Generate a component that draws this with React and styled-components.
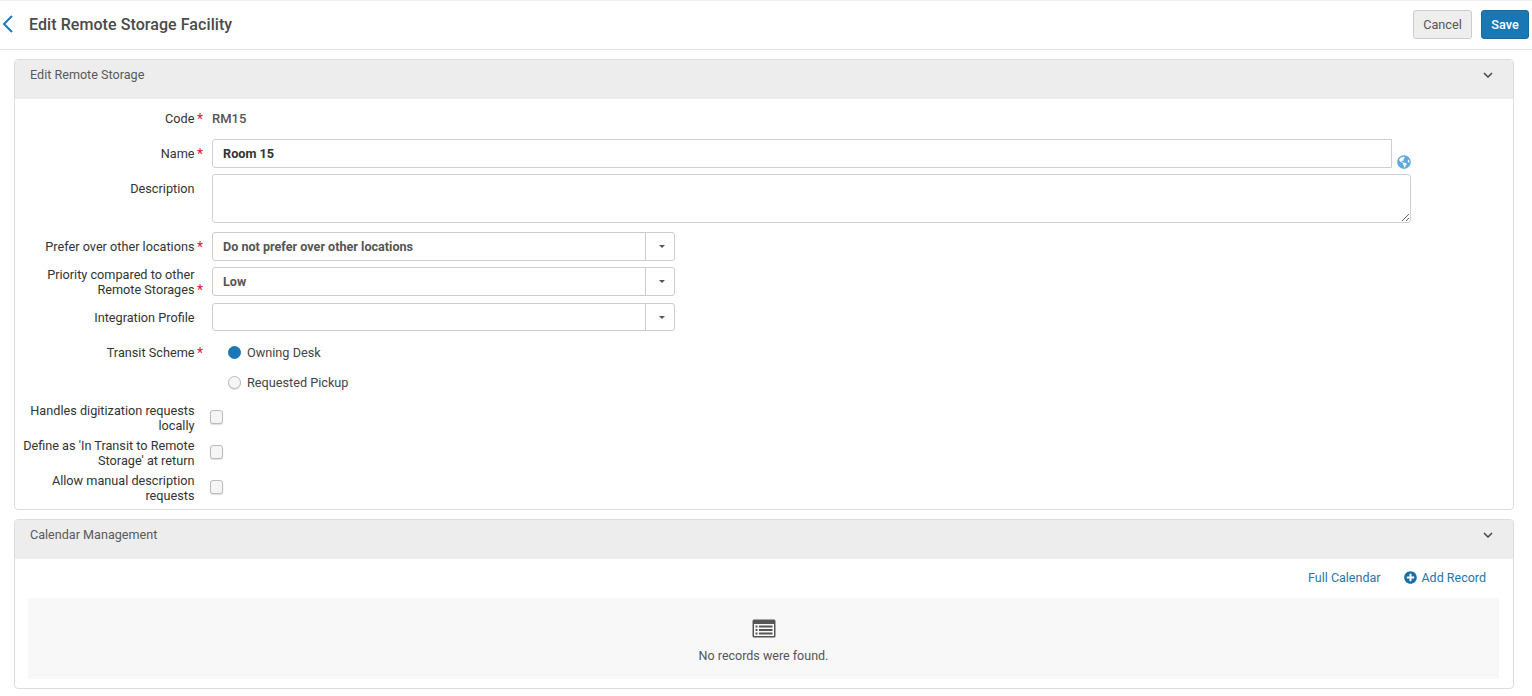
import React from 'react';
import styled, { createGlobalStyle } from 'styled-components';
import { FaGlobeAmericas, FaPlusCircle } from 'react-icons/fa';

const GlobalStyle = createGlobalStyle`
  html, body {
    margin: 0;
    padding: 0;
    background: #fff;
    overflow: hidden;
  }
  body {
    font-family: Roboto, "Liberation Sans", sans-serif;
    font-size: 12.7px;
    color: #444;
  }
  * { box-sizing: border-box; }
`;

const BackIcon = () => (
  <svg width="12" height="18" viewBox="0 0 12 18" fill="none">
    <path d="M10 1 L2 9 L10 17" stroke="#1a7ab8" strokeWidth="2" />
  </svg>
);

const ChevronIcon = () => (
  <svg width="10" height="6" viewBox="0 0 10 6" fill="none">
    <path d="M1 1 L5 5 L9 1" stroke="#444" strokeWidth="1.5" />
  </svg>
);

const RecordsIcon = () => (
  <svg width="24" height="19" viewBox="0 0 24 19">
    <rect x="0.5" y="0.5" width="23" height="18" rx="1.5" fill="#555" />
    <rect x="2" y="5" width="20" height="12" fill="#f8f8f8" />
    <g fill="#555">
      <rect x="3.5" y="6.5" width="2" height="2" />
      <rect x="7" y="6.5" width="13.5" height="2" />
      <rect x="3.5" y="10" width="2" height="2" />
      <rect x="7" y="10" width="13.5" height="2" />
      <rect x="3.5" y="13.5" width="2" height="2" />
      <rect x="7" y="13.5" width="13.5" height="2" />
    </g>
  </svg>
);

const SelectField = ({ value }) => (
  <Select>
    <SelectValue>{value}</SelectValue>
    <SelectToggle>
      <Caret />
    </SelectToggle>
  </Select>
);

const CheckRow = ({ label, top = 5 }) => (
  <Row $top={top} $height={30}>
    <Label>{label}</Label>
    <Checkbox />
  </Row>
);

export default function App() {
  return (
    <Page>
      <GlobalStyle />
      <Header>
        <TitleGroup>
          <BackIcon />
          <Title>Edit Remote Storage Facility</Title>
        </TitleGroup>
        <Actions>
          <CancelButton>Cancel</CancelButton>
          <SaveButton>Save</SaveButton>
        </Actions>
      </Header>

      <Panel $top={9}>
        <PanelHeader>
          <PanelTitle>Edit Remote Storage</PanelTitle>
          <ChevronIcon />
        </PanelHeader>
        <FormBody>
          <Row $top={0} $height={25}>
            <Label $required>Code</Label>
            <StaticValue>RM15</StaticValue>
          </Row>
          <Row $top={8} $height={29}>
            <Label $required>Name</Label>
            <NameInput>Room 15</NameInput>
            <GlobeWrap>
              <FaGlobeAmericas size={14} color="#5aa9e0" />
            </GlobeWrap>
          </Row>
          <Row $top={6} $height={49} $alignTop>
            <Label $alignTop>Description</Label>
            <TextArea />
          </Row>
          <Row $top={9} $height={29}>
            <Label $required>Prefer over other locations</Label>
            <SelectField value="Do not prefer over other locations" />
          </Row>
          <Row $top={6} $height={29}>
            <Label $required>Priority compared to other Remote Storages</Label>
            <SelectField value="Low" />
          </Row>
          <Row $top={7} $height={28}>
            <Label>Integration Profile</Label>
            <SelectField value="" />
          </Row>
          <Row $top={9} $height={25}>
            <Label $required>Transit Scheme</Label>
            <RadioOption>
              <Radio $checked />
              Owning Desk
            </RadioOption>
          </Row>
          <Row $top={5} $height={25}>
            <Label />
            <RadioOption>
              <Radio />
              Requested Pickup
            </RadioOption>
          </Row>
          <CheckRow top={8} label="Handles digitization requests locally" />
          <CheckRow label="Define as 'In Transit to Remote Storage' at return" />
          <CheckRow label="Allow manual description requests" />
        </FormBody>
      </Panel>

      <Panel $top={9}>
        <PanelHeader>
          <PanelTitle>Calendar Management</PanelTitle>
          <ChevronIcon />
        </PanelHeader>
        <CalendarBody>
          <LinkBar>
            <TextLink>Full Calendar</TextLink>
            <TextLink>
              <FaPlusCircle size={13} color="#1a6ea8" />
              Add Record
            </TextLink>
          </LinkBar>
          <EmptyState>
            <RecordsIcon />
            <EmptyText>No records were found.</EmptyText>
          </EmptyState>
        </CalendarBody>
      </Panel>
    </Page>
  );
}

const Page = styled.div`
  width: 1532px;
  height: 696px;
  border-top: 1px solid #f0f0f0;
`;

const Header = styled.header`
  height: 49px;
  display: flex;
  align-items: center;
  justify-content: space-between;
  padding: 0 3px 2px 2px;
  border-bottom: 1px solid #e4e4e4;
`;

const TitleGroup = styled.div`
  display: flex;
  align-items: center;
  gap: 15px;
`;

const Title = styled.h1`
  margin: 0;
  font-size: 16px;
  font-weight: 500;
  letter-spacing: 0.07px;
  color: #4a4a4a;
`;

const Actions = styled.div`
  display: flex;
  gap: 9px;
`;

const CancelButton = styled.button`
  width: 59px;
  height: 29px;
  padding: 0;
  font: 12.7px Roboto, sans-serif;
  color: #555;
  background: #eee;
  border: 1px solid #ccc;
  border-radius: 3px;
`;

const SaveButton = styled.button`
  width: 48px;
  height: 29px;
  padding: 0;
  font: 500 12.7px Roboto, sans-serif;
  color: #fff;
  background: #1a77b5;
  border: 1px solid #166a9f;
  border-radius: 3px;
`;

const Panel = styled.section`
  margin: ${(p) => p.$top}px 18px 0 14px;
  border: 1px solid #ddd;
  border-radius: 4px;
  overflow: hidden;
`;

const PanelHeader = styled.div`
  height: 39px;
  display: flex;
  justify-content: space-between;
  padding: 7px 20px 0 15px;
  background: #ededed;
  svg { margin-top: 5px; }
`;

const PanelTitle = styled.div`
  font-size: 12.6px;
  color: #5a5a5a;
`;

const FormBody = styled.div`
  padding: 7px 0 6px;
`;

const Row = styled.div`
  display: flex;
  align-items: ${(p) => (p.$alignTop ? 'flex-start' : 'center')};
  height: ${(p) => p.$height}px;
  margin-top: ${(p) => p.$top}px;
`;

const Label = styled.label`
  position: relative;
  width: 179.5px;
  margin-right: 17.5px;
  flex-shrink: 0;
  text-align: right;
  line-height: 15px;
  color: #333;
  ${(p) => p.$alignTop && 'margin-top: 7px;'}
  ${(p) => p.$required && `
    &::after {
      content: '*';
      position: absolute;
      right: -8.5px;
      bottom: -1px;
      font-size: 14px;
      color: #e8112d;
    }
  `}
`;

const StaticValue = styled.div`
  font-weight: 500;
  font-size: 13px;
  color: #555;
`;

const NameInput = styled.div`
  width: 1180px;
  height: 29px;
  line-height: 27px;
  padding: 0 10px;
  font-weight: 700;
  color: #333;
  border: 1px solid #ccd0d4;
  border-radius: 3px 0 0 3px;
`;

const GlobeWrap = styled.div`
  display: flex;
  align-self: flex-end;
  margin: 0 0 -1px 5px;
`;

const TextArea = styled.textarea`
  width: 1199px;
  height: 49px;
  border: 1px solid #ccd0d4;
  border-radius: 3px;
  outline: none;
`;

const Select = styled.div`
  width: 463px;
  height: 100%;
  display: flex;
  border: 1px solid #ccc;
  border-radius: 3px;
`;

const SelectValue = styled.div`
  flex: 1;
  padding: 0 10px;
  display: flex;
  align-items: center;
  font-size: 12.6px;
  font-weight: 700;
  color: #555;
`;

const SelectToggle = styled.div`
  width: 29px;
  display: flex;
  align-items: center;
  justify-content: center;
  padding-left: 3px;
  border-left: 1px solid #ccc;
`;

const Caret = styled.span`
  border-left: 3px solid transparent;
  border-right: 3px solid transparent;
  border-top: 3px solid #555;
`;

const RadioOption = styled.div`
  display: flex;
  align-items: center;
  gap: 6px;
  margin-left: 16px;
  color: #444;
`;

const Radio = styled.span`
  width: 13px;
  height: 13px;
  border-radius: 50%;
  background: ${(p) => (p.$checked ? '#1a77b5' : '#f5f5f5')};
  border: 1px solid ${(p) => (p.$checked ? '#1a77b5' : '#bbb')};
  box-shadow: ${(p) => (p.$checked ? 'none' : '0 1px 1px #ddd')};
`;

const Checkbox = styled.span`
  width: 13px;
  height: 14px;
  margin-left: -2.5px;
  margin-top: -3px;
  border: 1px solid #bbb;
  border-radius: 3px;
  background: #f5f5f5;
  box-shadow: 0 1px 1px #ddd;
`;

const CalendarBody = styled.div`
  padding: 0 14px 9px 13px;
`;

const LinkBar = styled.div`
  height: 39px;
  display: flex;
  align-items: center;
  justify-content: flex-end;
  gap: 24px;
  padding: 0 13px 3px 0;
`;

const TextLink = styled.a`
  display: flex;
  align-items: center;
  gap: 4px;
  font-size: 12.5px;
  color: #2a74a8;
`;

const EmptyState = styled.div`
  height: 81px;
  display: flex;
  flex-direction: column;
  align-items: center;
  padding-top: 21px;
  background: #f8f8f8;
`;

const EmptyText = styled.div`
  margin-top: 10px;
  font-size: 12.5px;
  color: #555;
`;
